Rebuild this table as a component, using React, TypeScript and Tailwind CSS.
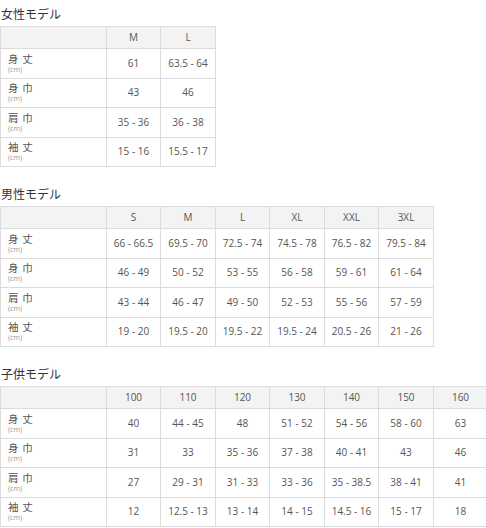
import { Fragment } from "react";

const font = { fontFamily: '"Open Sans", "Noto Sans CJK JP", sans-serif' };

type Table = {
  title: string;
  cols: string[];
  rows: string[][];
  grid: string;
};

const labels = ["身 丈", "身 巾", "肩 巾", "袖 丈"];

const tables: Table[] = [
  {
    title: "女性モデル",
    cols: ["M", "L"],
    rows: [
      ["61", "63.5 - 64"],
      ["43", "46"],
      ["35 - 36", "36 - 38"],
      ["15 - 16", "15.5 - 17"],
    ],
    grid: "grid-cols-[106px_54px_55px]",
  },
  {
    title: "男性モデル",
    cols: ["S", "M", "L", "XL", "XXL", "3XL"],
    rows: [
      ["66 - 66.5", "69.5 - 70", "72.5 - 74", "74.5 - 78", "76.5 - 82", "79.5 - 84"],
      ["46 - 49", "50 - 52", "53 - 55", "56 - 58", "59 - 61", "61 - 64"],
      ["43 - 44", "46 - 47", "49 - 50", "52 - 53", "55 - 56", "57 - 59"],
      ["19 - 20", "19.5 - 20", "19.5 - 22", "19.5 - 24", "20.5 - 26", "21 - 26"],
    ],
    grid: "grid-cols-[106px_54px_55px_54px_55px_54px_55px]",
  },
  {
    title: "子供モデル",
    cols: ["100", "110", "120", "130", "140", "150", "160"],
    rows: [
      ["40", "44 - 45", "48", "51 - 52", "54 - 56", "58 - 60", "63"],
      ["31", "33", "35 - 36", "37 - 38", "40 - 41", "43", "46"],
      ["27", "29 - 31", "31 - 33", "33 - 36", "35 - 38.5", "38 - 41", "41"],
      ["12", "12.5 - 13", "13 - 14", "14 - 15", "14.5 - 16", "15 - 17", "18"],
    ],
    grid: "grid-cols-[106px_54px_55px_54px_55px_54px_55px_54px]",
  },
];

const SizeTable = ({ table, first }: { table: Table; first: boolean }) => (
  <div className={first ? "pt-[4px]" : "mt-[17px]"}>
    <div className="h-[22px] pl-[1px] text-[12px] leading-[22px] text-[#333]">{table.title}</div>
    <div className={`grid w-max border-l border-t border-[#dcdcdc] ${table.grid}`}>
      <div className="h-[22px] border-b border-r border-[#dcdcdc] bg-[#f3f3f3]" />
      {table.cols.map((c) => (
        <div
          key={c}
          className="flex h-[22px] items-center justify-center border-b border-r border-[#dcdcdc] bg-[#f3f3f3] text-[10px] text-[#555]"
        >
          {c}
        </div>
      ))}
      {table.rows.map((row, i) => (
        <Fragment key={i}>
          <div className="flex h-[29.5px] flex-col justify-center border-b border-r border-[#dcdcdc] pl-[7px]">
            <span className="text-[10.5px] leading-[12px] tracking-[0.5px] text-[#555]">{labels[i]}</span>
            <span className="text-[7px] leading-[9px] text-[#999]">(cm)</span>
          </div>
          {row.map((v, j) => (
            <div
              key={j}
              className="flex h-[29.5px] items-center justify-center border-b border-r border-[#dcdcdc] text-[10px] text-[#555]"
            >
              {v}
            </div>
          ))}
        </Fragment>
      ))}
    </div>
  </div>
);

export default function App() {
  return (
    <div className="h-[528px] w-[486px] overflow-hidden bg-white" style={font}>
      {tables.map((t, i) => (
        <SizeTable key={t.title} table={t} first={i === 0} />
      ))}
    </div>
  );
}
